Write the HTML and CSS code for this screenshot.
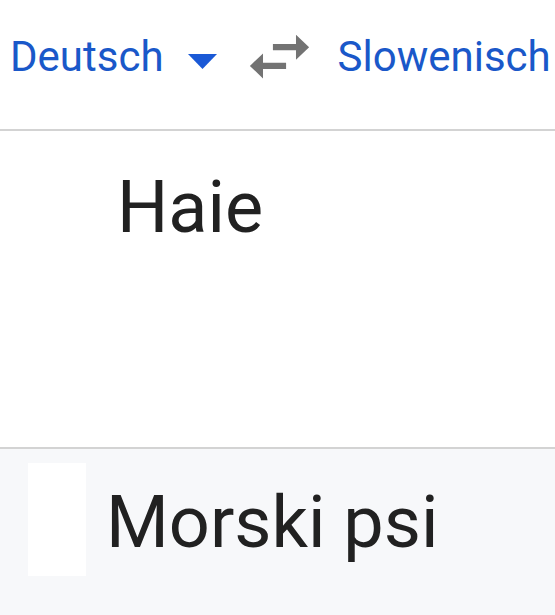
FILE: index.html
```html
<!DOCTYPE html>
<html lang="de">
<head>
<meta charset="utf-8">
<title>Übersetzen</title>
<link rel="stylesheet" href="styles.css">
</head>
<body>
<div class="app">
  <header class="langbar">
    <span class="lang lang-src">Deutsch</span>
    <svg class="caret" viewBox="0 0 29 15" width="29" height="15"><polygon points="0,0 29,0 14.5,15" fill="#1a59d6"/></svg>
    <svg class="swap" viewBox="0 0 24 24" width="79" height="75" preserveAspectRatio="none"><path d="M6.99 11L3 15l3.99 4v-3H14v-2H6.99v-3zM21 9l-3.99-4v3H10v2h7.01v3L21 9z" fill="#737373"/></svg>
    <span class="lang lang-dst">Slowenisch</span>
  </header>
  <section class="input">
    <div class="source-text">Haie</div>
  </section>
  <section class="result">
    <div class="thumb"></div>
    <div class="result-text">Morski psi</div>
  </section>
</div>
</body>
</html>
```
FILE: styles.css
```css
html, body {
  margin: 0;
  padding: 0;
  background: #ffffff;
}
body {
  width: 555px;
  height: 615px;
  overflow: hidden;
  font-family: Roboto, "Noto Sans", sans-serif;
}
.app {
  display: flex;
  flex-direction: column;
  height: 615px;
}
.langbar {
  display: flex;
  align-items: flex-start;
  box-sizing: border-box;
  height: 131px;
  border-bottom: 2px solid #d3d3d3;
  padding-left: 10px;
  flex: none;
}
.lang {
  font-size: 42px;
  line-height: 50px;
  color: #1a58c9;
  margin-top: 32px;
  white-space: nowrap;
}
.caret {
  margin-top: 54px;
  margin-left: 24px;
  flex: none;
}
.swap {
  margin-top: 19px;
  margin-left: 23px;
  flex: none;
}
.lang-dst {
  margin-left: 19px;
}
.input {
  box-sizing: border-box;
  height: 318px;
  border-bottom: 2px solid #d3d3d3;
  padding: 35px 0 0 117px;
  flex: none;
}
.source-text {
  font-size: 72px;
  line-height: 84px;
  color: #212121;
}
.result {
  flex: 1;
  background: #f7f8fa;
  display: flex;
  align-items: flex-start;
  padding: 14px 0 0 28px;
}
.thumb {
  width: 58px;
  height: 113px;
  background: #ffffff;
  flex: none;
}
.result-text {
  font-size: 72px;
  line-height: 87px;
  color: #212121;
  margin-top: 16px;
  margin-left: 20px;
  white-space: nowrap;
}
```
